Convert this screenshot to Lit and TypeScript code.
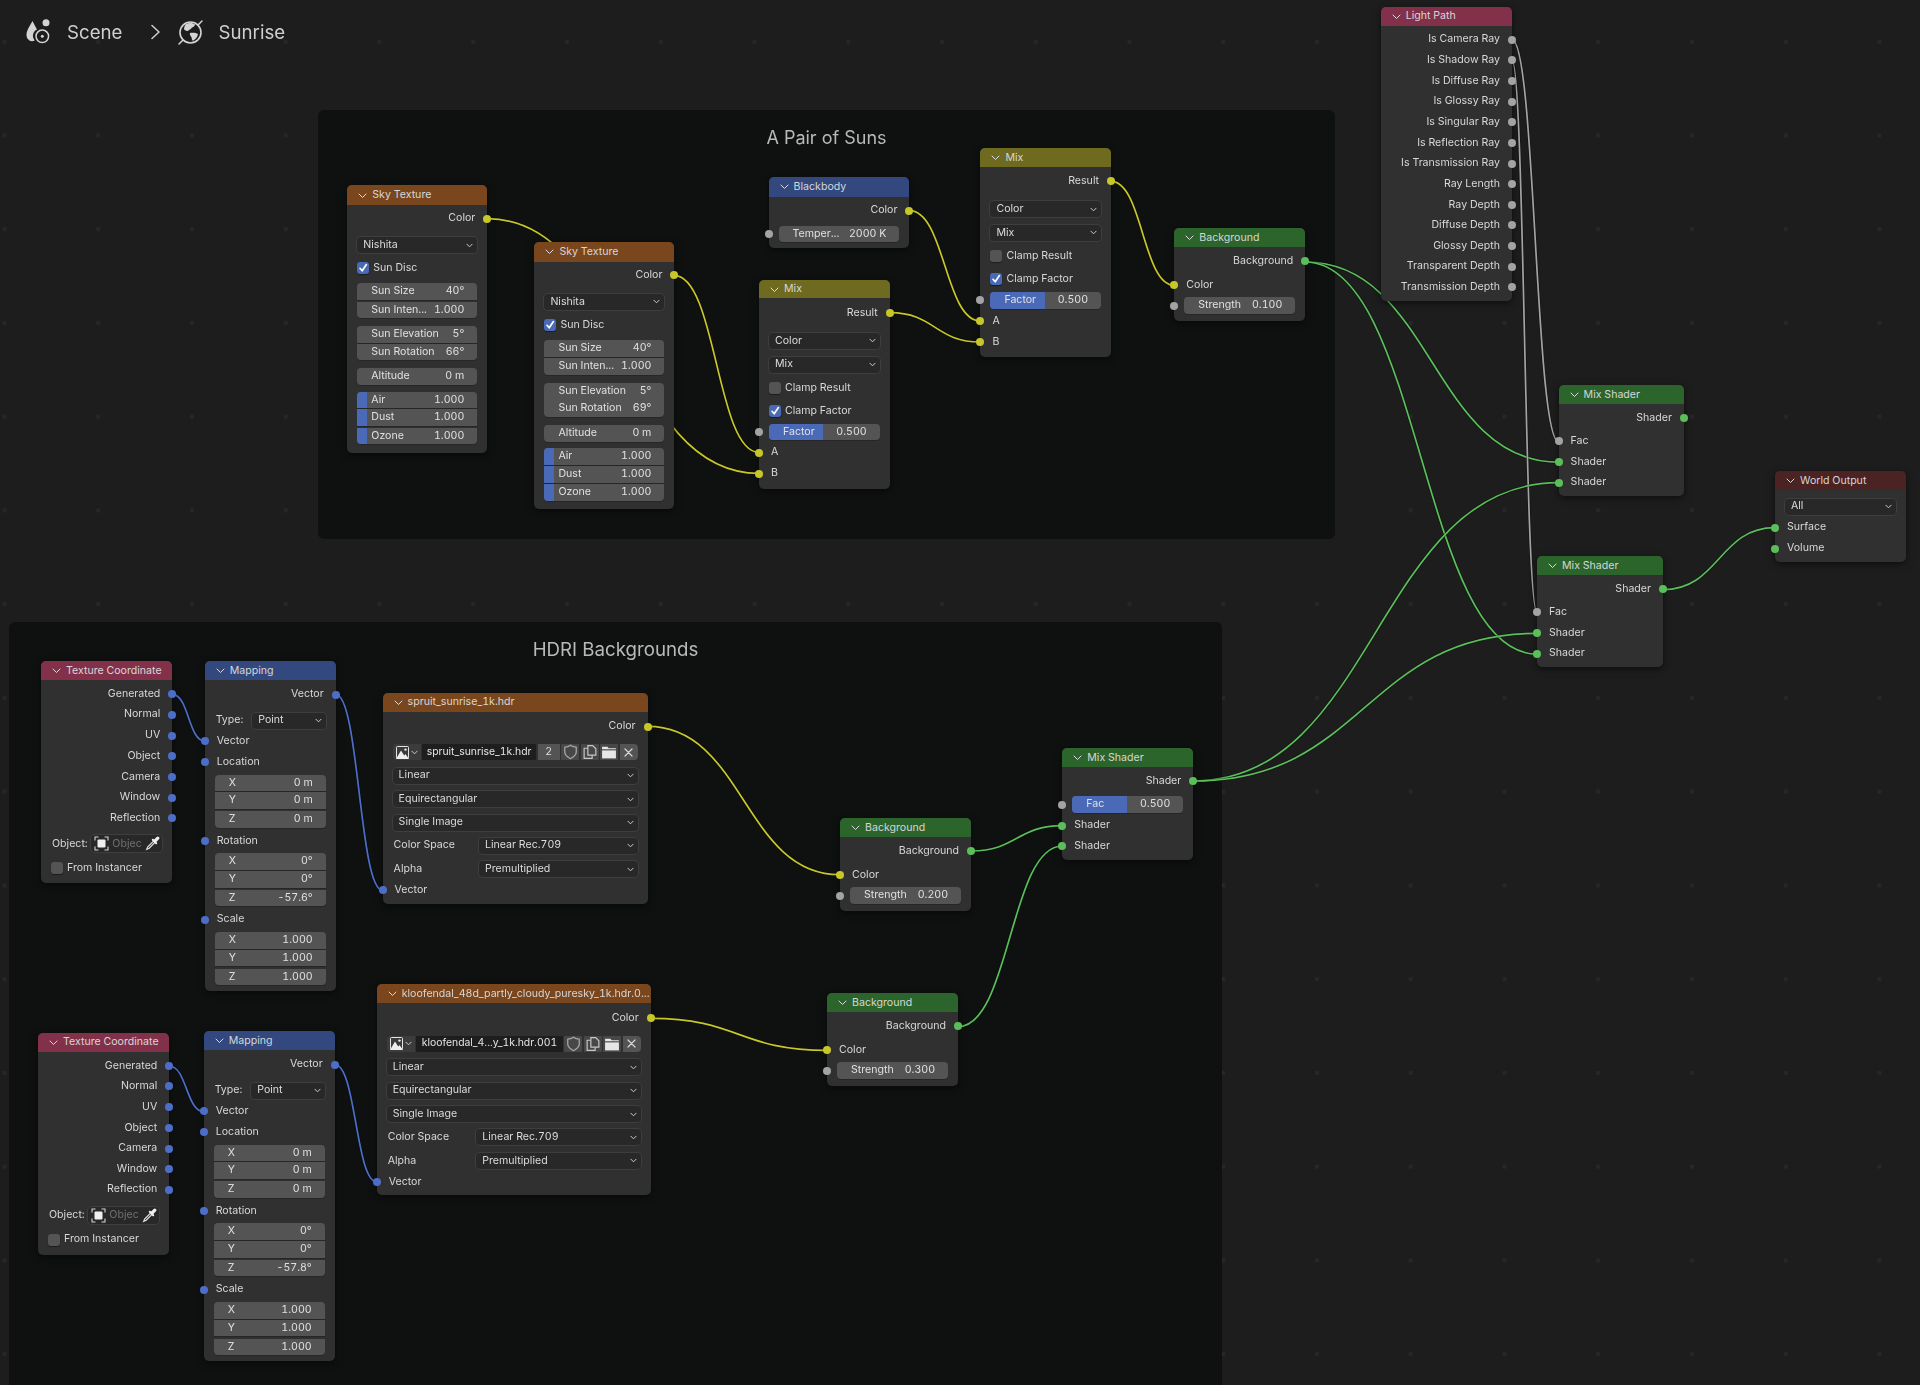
import { LitElement, html, css, svg } from "lit";
import { customElement } from "lit/decorators.js";

type Sock = "y" | "g" | "s" | "b";
type Row = {
  c: number;
  t: "out" | "in" | "drop" | "check" | "field" | "obj" | "bar";
  l?: string;
  v?: string;
  s?: Sock;
  lw?: number;
  on?: boolean;
  pos?: string;
  fill?: number;
  name?: string;
  users?: string;
};
type NodeData = { x: number; y: number; w: number; b: number; hdr: number; col: string; title: string; rows: Row[] };

const H = 17;
const DY = 0.7;
const out = (c: number, l: string, s: Sock): Row => ({ c, t: "out", l, s });
const inp = (c: number, l: string, s: Sock): Row => ({ c, t: "in", l, s });
const drop = (c: number, v: string, l = "", lw = 0): Row => ({ c, t: "drop", v, l, lw });
const chk = (c: number, l: string, on: boolean): Row => ({ c, t: "check", l, on });
const fld = (c: number, l: string, v: string, pos = "single", fill = 0, s?: Sock): Row => ({ c, t: "field", l, v, pos, fill, s });

const ORANGE = "#79461d", BLUE = "#32487f", OLIVE = "#6e6a1f", GREEN = "#2b652b", CRIMSON = "#83314a", DARKRED = "#4a2322";

const sky = (x: number, y: number, rot: string): NodeData => ({
  x, y, w: 140, b: y + 267.4, hdr: 19.7, col: ORANGE, title: "Sky Texture",
  rows: [
    out(y + 32.7, "Color", "y"),
    drop(y + 59.2, "Nishita"),
    chk(y + 82.4, "Sun Disc", true),
    fld(y + 105.7, "Sun Size", "40°", "first"),
    fld(y + 124, "Sun Inten...", "1.000", "last"),
    fld(y + 148.7, "Sun Elevation", "5°", "first"),
    fld(y + 166, "Sun Rotation", rot, "last"),
    fld(y + 190.7, "Altitude", "0 m"),
    fld(y + 214, "Air", "1.000", "first", 0.08),
    fld(y + 231.7, "Dust", "1.000", "mid", 0.08),
    fld(y + 250, "Ozone", "1.000", "last", 0.08),
  ],
});
const mix = (x: number, y: number): NodeData => ({
  x, y, w: 130.7, b: y + 208.7, hdr: 18.4, col: OLIVE, title: "Mix",
  rows: [
    out(y + 32.2, "Result", "y"),
    drop(y + 60.2, "Color"),
    drop(y + 83.9, "Mix"),
    chk(y + 107.4, "Clamp Result", false),
    chk(y + 130.2, "Clamp Factor", true),
    fld(y + 151.5, "Factor", "0.500", "single", 0.49, "g"),
    inp(y + 171.9, "A", "y"),
    inp(y + 192.9, "B", "y"),
  ],
});
const bg = (x: number, y: number, v: string): NodeData => ({
  x, y, w: 131, b: y + 92.6, hdr: 19, col: GREEN, title: "Background",
  rows: [out(y + 32.5, "Background", "s"), inp(y + 56, "Color", "y"), fld(y + 76.7, "Strength", v, "single", 0, "g")],
});
const mixShader = (x: number, y: number, w: number, fac: boolean): NodeData => ({
  x, y, w, b: y + 111.3, hdr: 19, col: GREEN, title: "Mix Shader",
  rows: [
    out(y + 32.5, "Shader", "s"),
    fac ? fld(y + 55.7, "Fac", "0.500", "single", 0.49, "g") : inp(y + 55.7, "Fac", "g"),
    inp(y + 76.6, "Shader", "s"),
    inp(y + 97, "Shader", "s"),
  ],
});
const texCoord = (x: number, y: number): NodeData => ({
  x, y, w: 131.3, b: y + 222.2, hdr: 19, col: CRIMSON, title: "Texture Coordinate",
  rows: [
    out(y + 32.7, "Generated", "b"),
    out(y + 53, "Normal", "b"),
    out(y + 74, "UV", "b"),
    out(y + 94.8, "Object", "b"),
    out(y + 115.4, "Camera", "b"),
    out(y + 136, "Window", "b"),
    out(y + 156.4, "Reflection", "b"),
    { c: y + 182.3, t: "obj" },
    chk(y + 206.2, "From Instancer", false),
  ],
});
const mapping = (x: number, y: number, z: string): NodeData => ({
  x, y, w: 131, b: y + 330.2, hdr: 19, col: BLUE, title: "Mapping",
  rows: [
    out(y + 32.8, "Vector", "b"),
    drop(y + 58.8, "Point", "Type:", 36.5),
    inp(y + 79.6, "Vector", "b"),
    inp(y + 100.3, "Location", "b"),
    fld(y + 121.3, "X", "0 m", "first"),
    fld(y + 138.9, "Y", "0 m", "mid"),
    fld(y + 157.6, "Z", "0 m", "last"),
    inp(y + 179.3, "Rotation", "b"),
    fld(y + 200, "X", "0°", "first"),
    fld(y + 217.7, "Y", "0°", "mid"),
    fld(y + 236.2, "Z", z, "last"),
    inp(y + 258, "Scale", "b"),
    fld(y + 278.7, "X", "1.000", "first"),
    fld(y + 296.5, "Y", "1.000", "mid"),
    fld(y + 315.2, "Z", "1.000", "last"),
  ],
});
const imgTex = (x: number, y: number, w: number, title: string, name: string, users: string, lw: number): NodeData => ({
  x, y, w, b: y + 211, hdr: 19, col: ORANGE, title,
  rows: [
    out(y + 33.2, "Color", "y"),
    { c: y + 58.7, t: "bar", name, users },
    drop(y + 82.2, "Linear"),
    drop(y + 105.8, "Equirectangular"),
    drop(y + 129.3, "Single Image"),
    drop(y + 152.3, "Linear Rec.709", "Color Space", lw),
    drop(y + 176, "Premultiplied", "Alpha", lw),
    inp(y + 196.9, "Vector", "b"),
  ],
});

const NODES: NodeData[] = [
  sky(347.3, 185.3, "66°"),
  sky(534.4, 242, "69°"),
  { x: 768.6, y: 177.3, w: 140.8, b: 247.7, hdr: 19.4, col: BLUE, title: "Blackbody",
    rows: [out(210, "Color", "y"), fld(233.3, "Temper...", "2000 K", "single", 0, "g")] },
  mix(759, 280),
  mix(980.4, 148.3),
  bg(1174.3, 228.3, "0.100"),
  { x: 1380.7, y: 6.5, w: 131.3, b: 300.5, hdr: 19.5, col: CRIMSON, title: "Light Path",
    rows: ["Is Camera Ray", "Is Shadow Ray", "Is Diffuse Ray", "Is Glossy Ray", "Is Singular Ray", "Is Reflection Ray", "Is Transmission Ray", "Ray Length", "Ray Depth", "Diffuse Depth", "Glossy Depth", "Transparent Depth", "Transmission Depth"]
      .map((l, i) => out(39 + i * 20.65, l, "g")) },
  mixShader(1558.6, 385, 125.4, false),
  mixShader(1537, 556, 126, false),
  { x: 1775, y: 471, w: 131, b: 562, hdr: 19, col: DARKRED, title: "World Output",
    rows: [drop(506, "All"), inp(527, "Surface", "s"), inp(548, "Volume", "s")] },
  texCoord(41, 661),
  mapping(204.7, 661, "-57.6°"),
  imgTex(382.6, 692.7, 265, "spruit_sunrise_1k.hdr", "spruit_sunrise_1k.hdr", "2", 85.4),
  bg(840, 818.3, "0.200"),
  mixShader(1062.3, 748.3, 131, true),
  imgTex(376.7, 984.3, 274, "kloofendal_48d_partly_cloudy_puresky_1k.hdr.0...", "kloofendal_4...y_1k.hdr.001", "", 88.6),
  bg(827, 993.3, "0.300"),
  texCoord(38, 1032.7),
  mapping(203.7, 1031, "-57.8°"),
];

const COL: Record<Sock, string> = { y: "#c7c729", g: "#a3a3a3", s: "#5abe5a", b: "#4d6ec8" };
const LINKS: [number, number, number, number, Sock][] = [
  [487.5, 218, 759, 472.7, "y"],
  [674, 274.7, 759, 451.7, "y"],
  [909.4, 210, 980.4, 320.3, "y"],
  [889.8, 312, 980.4, 341.3, "y"],
  [1111, 180.7, 1174.3, 284.7, "y"],
  [1305.3, 261.3, 1558.6, 461.4, "s"],
  [1305.3, 261.3, 1537, 653.5, "s"],
  [1512, 39, 1558.6, 441, "g"],
  [1512, 60, 1537, 611.4, "g"],
  [1663, 589, 1775, 527, "s"],
  [1193.3, 780.3, 1558.6, 482, "s"],
  [1193.3, 780.3, 1537, 632.7, "s"],
  [647.6, 725.7, 840, 874, "y"],
  [650.7, 1017.7, 827, 1049.7, "y"],
  [971.3, 850.3, 1062.3, 825, "s"],
  [958, 1026, 1062.3, 845.3, "s"],
  [172.4, 693.7, 204.7, 740.3, "b"],
  [335.7, 693.7, 382.6, 889.7, "b"],
  [169.3, 1065.3, 203.7, 1111, "b"],
  [335, 1064, 376.7, 1181, "b"],
];

const chevDown = html`<svg class="cd" viewBox="0 0 8 5"><path d="M1 1l3 3 3-3" fill="none" stroke="currentColor" stroke-width="1.1" stroke-linecap="round" stroke-linejoin="round"/></svg>`;
const imgIcon = html`<svg width="15" height="15" viewBox="0 0 15 15"><rect x="1.5" y="1.5" width="12" height="12" rx="1" fill="none" stroke="#e4e4e4" stroke-width="1"/><path d="M1 14L6 5.5l3.2 5 1.3-1.6L14 14z" fill="#efefef"/><circle cx="10.5" cy="4.6" r="1.2" fill="#efefef"/></svg>`;
const shield = html`<svg width="15" height="16" viewBox="0 0 14 15"><path d="M7 1.2C5.4 2.5 3.4 3 1.600 3v4.600c0 3 2.900 4.900 5.400 6.200 2.500-1.300 5.400-3.200 5.400-6.200V3C10.600 3 8.600 2.500 7 1.200z" fill="none" stroke="#a6a6a6" stroke-width="1.2" stroke-linejoin="round"/></svg>`;
const copy = html`<svg width="16" height="16" viewBox="0 0 15 15"><path d="M5.500 1.500h4.500l3 3v6h-7.500z" fill="none" stroke="#c8c8c8" stroke-width="1.100"/><path d="M5.500 4H2v9.500h7.500v-3" fill="none" stroke="#c8c8c8" stroke-width="1.100"/></svg>`;
const folder = html`<svg width="16" height="14" viewBox="0 0 15 13"><path d="M1 1.500h5l1.200 1.500H14v1H1z" fill="#e6e6e6"/><rect x="1" y="5" width="13" height="7.500" fill="#e6e6e6"/></svg>`;
const xIcon = html`<svg width="11" height="11" viewBox="0 0 11 11"><path d="M2 2l7 7M9 2l-7 7" stroke="#d6d6d6" stroke-width="1.200" stroke-linecap="round"/></svg>`;
const objIcon = html`<svg width="15" height="15" viewBox="0 0 15 15"><path d="M1 4.500V1h3.500M10.500 1H14v3.500M14 10.500V14h-3.500M4.500 14H1v-3.500" fill="none" stroke="#d4d4d4" stroke-width="1.100"/><rect x="3.500" y="3.500" width="8" height="8" rx="1" fill="#efefef"/></svg>`;
const dropper = html`<svg width="15" height="15" viewBox="0 0 15 15"><path d="M8.800 4.800L2.800 10.800 1.700 13.300 4.200 12.200 10.200 6.200" fill="none" stroke="#e2e2e2" stroke-width="1.200"/><path d="M7.800 3.800l3.400 3.400" stroke="#efefef" stroke-width="2" stroke-linecap="round"/><path d="M10 5l2.800-2.800" stroke="#efefef" stroke-width="3.200" stroke-linecap="round"/></svg>`;
const check = html`<svg class="tick" viewBox="0 0 12 12"><path d="M3 6.300l2.200 2.500L9.400 2.600" fill="none" stroke="#fff" stroke-width="1.700" stroke-linecap="round" stroke-linejoin="round"/></svg>`;

@customElement("bl-node")
class BlNode extends LitElement {
  static properties = { data: { attribute: false } };
  data!: NodeData;
  static styles = css`
    :host { display: flex; flex-direction: column; position: absolute; background: #303030; border-radius: 5px; box-shadow: 0 2px 7px rgba(0,0,0,.55); font: 10.6px/1 Inter, "Noto Sans", sans-serif; font-variant-numeric: tabular-nums; color: #d8d8d8; filter: blur(.3px); }
    .hd { display: flex; align-items: center; gap: 5px; padding: 1px 11px 0; box-sizing: border-box; border-radius: 5px 5px 0 0; color: #d6d6d6; flex: none; white-space: nowrap; overflow: hidden; }
    .hd svg { width: 9px; height: 6px; flex: none; }
    .row { position: relative; height: 17px; flex: none; display: flex; align-items: center; padding: 0 10px; white-space: nowrap; }
    .out { justify-content: flex-end; padding-right: 12px; }
    .in { padding-left: 12px; }
    .sock { position: absolute; width: 8px; height: 8px; border-radius: 50%; top: 4.500px; }
    .sock.l { left: -4px; }
    .sock.r { right: -4px; }
    .lab { flex: none; padding-left: 1px; }
    .dd { flex: 1; min-width: 0; height: 16px; display: flex; align-items: center; justify-content: space-between; background: #282828; border-radius: 4px; box-shadow: 0 0 0 1px #3e3e3e; padding: 0 4px 0 6px; color: #dcdcdc; }
    .cd { width: 7px; height: 5px; flex: none; color: #d0d0d0; }
    .box { width: 12px; height: 12px; border-radius: 3px; background: #545454; box-shadow: 0 1px 1px rgba(0,0,0,.4); margin-right: 4px; flex: none; position: relative; }
    .box.on { background: #4a6ab8; }
    .tick { position: absolute; inset: 0; width: 12px; height: 12px; }
    .f { flex: 1; height: 16.500px; background: #545454; display: flex; align-items: center; justify-content: space-between; padding: 0 13px 0 14px; position: relative; overflow: hidden; box-shadow: 0 1px 0 #262626; color: #e0e0e0; }
    .f span { position: relative; }
    .f i { position: absolute; left: 0; top: 0; bottom: 0; background: #4a6ab8; }
    .single { border-radius: 4px; }
    .first { border-radius: 4px 4px 0 0; }
    .last { border-radius: 0 0 4px 4px; }
    .objf { flex: 1; height: 17px; display: flex; align-items: center; justify-content: space-between; background: #282828; border-radius: 4px; box-shadow: 0 0 0 1px #3e3e3e; padding: 0 2px 0 3px; margin-left: 3px; color: #707070; }
    .bar { gap: 1.500px; }
    .b { height: 16px; display: flex; align-items: center; justify-content: center; flex: none; background: #474747; border-radius: 1px; color: #e0e0e0; }
    .ib { width: 28px; background: #3c3c3c; gap: 1px; border-radius: 4px 0 0 4px; }
    .nm { flex: 1; min-width: 0; justify-content: center; background: #1e1e1e; color: #e4e4e4; font-size: 10.4px; }
    .us { width: 22px; background: #545454; }
    .w18 { width: 18px; }
    .xb { border-radius: 0 4px 4px 0; background: #545454; }
  `;
  socket(s: Sock | undefined, side: string) {
    return s ? html`<span class="sock ${side}" style="background:${COL[s]}"></span>` : "";
  }
  renderRow(r: Row, mt: number) {
    const st = `margin-top:${mt.toFixed(2)}px`;
    switch (r.t) {
      case "out":
        return html`<div class="row out" style=${st}>${r.l}${this.socket(r.s, "r")}</div>`;
      case "in":
        return html`<div class="row in" style=${st}>${r.l}${this.socket(r.s, "l")}</div>`;
      case "drop":
        return html`<div class="row" style=${st}>${r.l ? html`<span class="lab" style="width:${r.lw}px">${r.l}</span>` : ""}<div class="dd"><span>${r.v}</span>${chevDown}</div></div>`;
      case "check":
        return html`<div class="row" style=${st}><span class="box ${r.on ? "on" : ""}">${r.on ? check : ""}</span>${r.l}</div>`;
      case "field":
        return html`<div class="row" style=${st}>${this.socket(r.s, "l")}<div class="f ${r.pos}">${r.fill ? html`<i style="width:${r.fill! * 100}%"></i>` : ""}<span>${r.l}</span><span>${r.v}</span></div></div>`;
      case "obj":
        return html`<div class="row" style=${st}><span class="lab">Object:</span><div class="objf">${objIcon}<span>Objec</span>${dropper}</div></div>`;
      case "bar":
        return html`<div class="row bar" style=${st}>
          <div class="b ib">${imgIcon}${chevDown}</div>
          <div class="b nm">${r.name}</div>
          ${r.users ? html`<div class="b us">${r.users}</div>` : ""}
          <div class="b w18">${shield}</div>
          <div class="b w18">${copy}</div>
          <div class="b w18">${folder}</div>
          <div class="b w18 xb">${xIcon}</div>
        </div>`;
    }
  }
  render() {
    const n = this.data;
    this.style.cssText = `left:${n.x}px;top:${n.y}px;width:${n.w}px;height:${n.b - n.y}px`;
    let end = n.y + n.hdr;
    const rows = n.rows.map((r) => {
      const c = r.c + DY;
      const mt = c - H / 2 - end;
      end = c + H / 2;
      return this.renderRow(r, mt);
    });
    return html`<div class="hd" style="height:${n.hdr}px;background:${n.col}"><svg viewBox="0 0 9 6"><path d="M1 1l3.500 3.500L8 1" fill="none" stroke="#dcdcdc" stroke-width="1" stroke-linecap="round" stroke-linejoin="round"/></svg>${n.title}</div>${rows}`;
  }
}

@customElement("app-root")
export class AppRoot extends LitElement {
  static styles = css`
    :host { display: block; position: relative; width: 1920px; height: 1385px; overflow: hidden; background-color: #1d1d1d; background-image: radial-gradient(circle, #272727 0 2px, transparent 2.500px); background-size: 93.750px 93.750px; background-position: -42.400px -5.200px; font-family: Inter, "Noto Sans", sans-serif; }
    .frame { position: absolute; background: #0f1111; border-radius: 6px; box-sizing: border-box; text-align: center; line-height: 22px; color: #b9b9b9; padding-top: 16.500px; filter: blur(.5px); }
    .f1 { left: 318px; top: 110px; width: 1017px; height: 429px; font-size: 18px; }
    .f2 { left: 9px; top: 622px; width: 1213px; height: 770px; font-size: 18.700px; }
    .links { position: absolute; inset: 0; width: 1920px; height: 1385px; }
    .crumbs { position: absolute; left: 25px; top: 16px; display: flex; align-items: center; height: 32px; font-size: 18.700px; color: #cfcfcf; filter: blur(.3px); }
    .crumbs .sep { margin: 0 17px 0 28px; display: flex; }
    .crumbs .t1 { margin-left: 16px; }
    .crumbs .t2 { margin-left: 15px; }
  `;
  render() {
    return html`
      <div class="frame f1">A Pair of Suns</div>
      <div class="frame f2">HDRI Backgrounds</div>
      <svg class="links" viewBox="0 0 1920 1385" fill="none">
        ${LINKS.map(([a, b, c, d, s]) => {
          const h = (c - a) * 0.5;
          const p = `M${a} ${b + DY}C${a + h} ${b + DY} ${c - h} ${d + DY} ${c} ${d + DY}`;
          return svg`<path d=${p} stroke="#000" stroke-opacity=".35" stroke-width="3"/><path d=${p} stroke=${COL[s]} stroke-width="1.700"/>`;
        })}
      </svg>
      ${NODES.map((n) => html`<bl-node .data=${n}></bl-node>`)}
      <div class="crumbs">
        <svg width="26" height="28" viewBox="0 0 26 28">
          <path d="M7.500 3C5 8 1.500 12 1.500 17c0 3.500 2.500 6 5.500 6.300 1-.1 2-.4 2.700-.9C8.300 20.800 7.700 18.800 8 16.800c.4-2.400 2-4.300 4-5.200C10.700 9 9 6 7.500 3z" fill="#d4d4d4"/>
          <circle cx="21" cy="4.700" r="3.500" fill="#d4d4d4"/>
          <circle cx="17.300" cy="18.300" r="6.300" fill="none" stroke="#d4d4d4" stroke-width="1.500"/>
          <circle cx="17.300" cy="18.300" r="1.500" fill="#d4d4d4"/>
        </svg>
        <span class="t1">Scene</span>
        <span class="sep"><svg width="9" height="16" viewBox="0 0 9 16"><path d="M1 1.500L8 8 1 14.500" fill="none" stroke="#cfcfcf" stroke-width="1.500" stroke-linecap="round" stroke-linejoin="round"/></svg></span>
        <svg width="27" height="27" viewBox="0 0 27 27">
          <circle cx="13.500" cy="13.500" r="10.500" fill="none" stroke="#d4d4d4" stroke-width="1.600"/>
          <path d="M21 6l4-4M6 21l-4 4" stroke="#d4d4d4" stroke-width="1.500" stroke-linecap="round"/>
          <path d="M9 5c3-1.500 7-1.200 9 .5-.3 2-2 2.500-3.500 3.500-.6 1.500-2.500 1.500-3.500 3-1.500 0-3.500-.5-4-2C7 8.500 8 6 9 5zM13 14c2-.5 6-.5 8 1-.5 3-2.500 5.500-5 6.800-1.500-1-1-3-2-4.300-.8-.8-1.500-2.300-1-3.500z" fill="#d4d4d4"/>
        </svg>
        <span class="t2">Sunrise</span>
      </div>
    `;
  }
}
void BlNode;
